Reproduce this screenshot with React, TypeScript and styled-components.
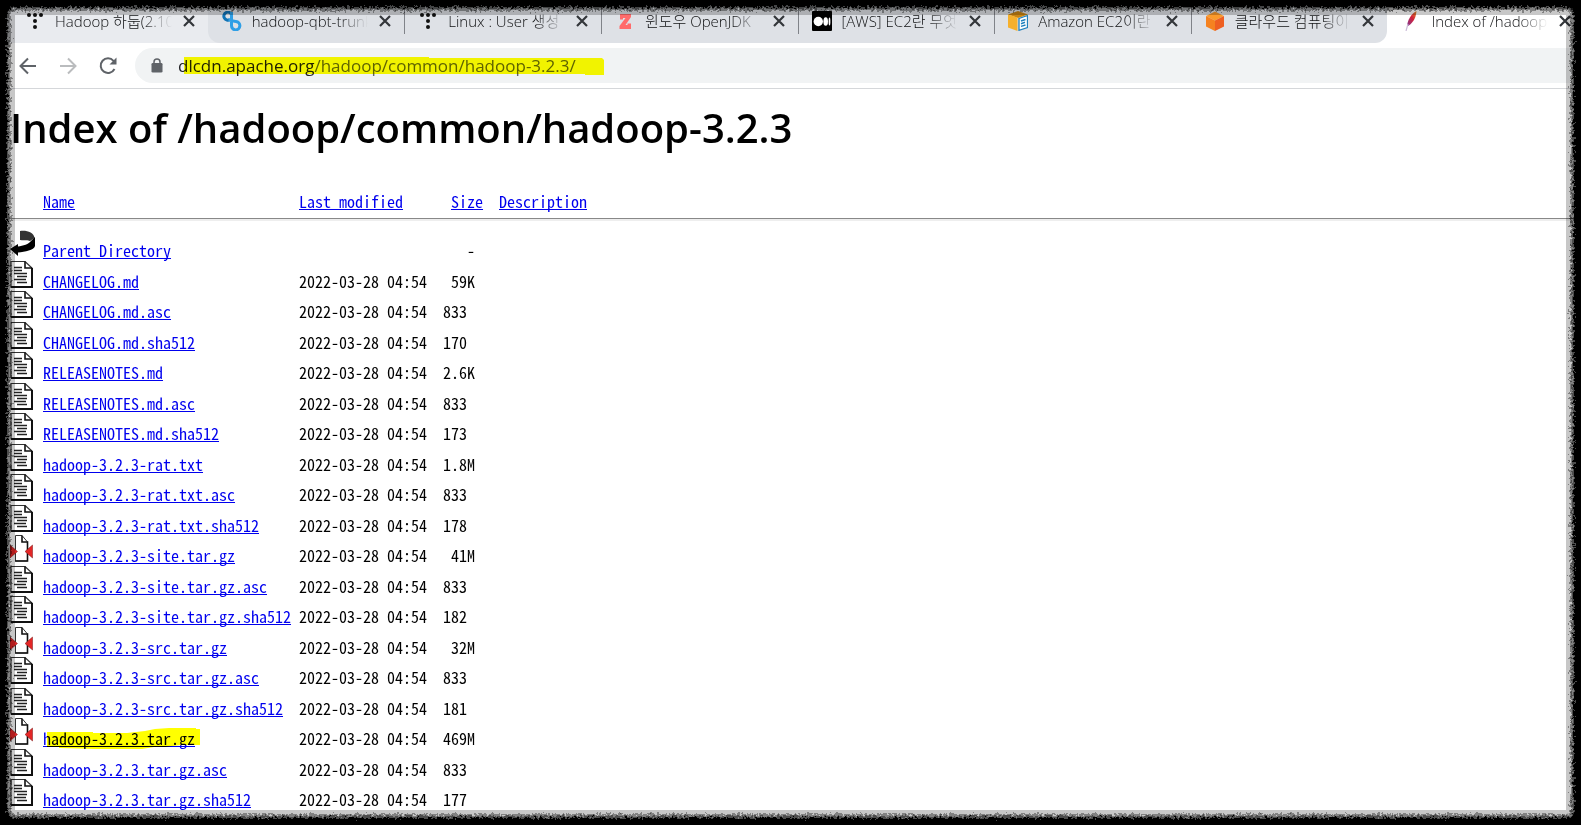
import React from 'react';
import styled, { createGlobalStyle } from 'styled-components';

const Global = createGlobalStyle`
  * { box-sizing: border-box; }
  html, body, #root { height: 100%; }
  body {
    margin: 0;
    overflow: hidden;
    background: #000;
    color: #000;
    font-family: "Open Sans", "Noto Sans CJK KR", sans-serif;
  }
`;

const Window = styled.div`
  position: relative;
  min-height: 100%;
  overflow: hidden;
  background: #fff;
  isolation: isolate;
`;

const TabStrip = styled.nav`
  display: flex;
  height: 43px;
  margin-right: -3px;
  padding-left: 11px;
  background: linear-gradient(90deg, #e9ebef 50%, #fff 50%);
`;

const Tab = styled.div`
  flex: 1 1 0;
  width: 0;
  min-width: 0;
  display: flex;
  align-items: center;
  padding: 0 9px 2px 14px;
`;

const EdgeTab = styled.div`
  flex: 1 1 0;
  min-width: 0;
  display: flex;
`;

const IdleTabs = styled.div`
  flex: 6 1 0;
  min-width: 0;
  display: flex;
  background: #dee1e6;
  border-radius: 0 0 12px 12px;
  overflow: hidden;

  ${Tab} + ${Tab} {
    background: linear-gradient(#808389, #808389) 0 0 / 1px 34px no-repeat;
  }
`;

const TabIcon = styled.svg`
  flex: none;
  width: 20px;
  height: 20px;
  margin-right: 10px;
`;

const TabTitle = styled.a`
  flex: 1;
  min-width: 0;
  overflow: hidden;
  white-space: nowrap;
  font-size: 15px;
  line-height: 22px;
  font-weight: 300;
  color: #101113;
  text-decoration: none;
  mask-image: linear-gradient(90deg, #000 calc(100% - 30px), transparent 100%);
`;

const TabClose = styled.button`
  flex: none;
  display: flex;
  align-items: center;
  justify-content: center;
  width: 20px;
  height: 20px;
  margin-left: 7px;
  padding: 0;
  border: 0;
  background: none;
`;

const Toolbar = styled.div`
  display: flex;
  align-items: center;
  height: 46px;
  padding-left: 18px;
  border-bottom: 1px solid #d5d7da;
`;

const NavButton = styled.button`
  flex: none;
  width: 20px;
  height: 20px;
  margin-right: 20px;
  padding: 0;
  border: 0;
  background: none;
  svg { display: block; }
  &:last-of-type { margin-right: 17px; }
`;

const Omnibox = styled.label`
  flex: 1;
  display: flex;
  align-items: center;
  gap: 15px;
  height: 35px;
  padding-left: 16px;
  margin-right: -20px;
  border-radius: 18px;
  background: #f1f3f4;
`;

const UrlField = styled.div`
  position: relative;
  flex: 1;
  font-size: 17px;
  line-height: 24px;
`;

const Url = styled.div`
  color: #5f6368;
  white-space: nowrap;
  b { font-weight: 400; color: #202124; }
`;

const Marker = styled.svg`
  position: absolute;
  overflow: visible;
  mix-blend-mode: multiply;
  pointer-events: none;
`;

const Page = styled.main`
  padding: 12px 0 0 10px;
`;

const Title = styled.h1`
  margin: 0;
  font-size: 40px;
  line-height: 54px;
  font-weight: 640;
  white-space: nowrap;
`;

const Listing = styled.table`
  width: 100%;
  margin-top: 26px;
  border-collapse: collapse;
  table-layout: fixed;
  font-family: "Noto Sans Mono CJK KR", "Liberation Mono", monospace;
  font-size: 16px;
  line-height: 24px;
  th, td {
    padding: 0;
    text-align: left;
    font-weight: 400;
    white-space: pre;
  }
`;

const HeadRow = styled.tr`
  height: 37px;
  th { vertical-align: top; padding-top: 8px; border-bottom: 1px solid #888; }
`;

const FileRow = styled.tr<{ $first?: boolean }>`
  height: ${p => (p.$first ? 44 : 30)}px;
  vertical-align: bottom;
  &:nth-child(even) { height: 31px; }
  ${p => p.$first && 'td { box-shadow: inset 0 2px #eee; }'}
`;

const FileIcon = styled.svg`
  display: block;
  width: 25px;
  height: 27px;
  margin: -2px 0 5px;
`;

const Link = styled.a`
  position: relative;
  color: #0000ee;
  text-decoration: underline;
  text-decoration-thickness: 1px;
  text-underline-offset: 1px;
  text-decoration-skip-ink: none;
`;

const Shade = styled.div`
  position: absolute;
  inset: 0;
  border: 15px solid rgba(0, 0, 0, 0.22);
  pointer-events: none;
`;

const Torn = styled.div<{ $size: number; $color: string }>`
  position: absolute;
  inset: -20px;
  border: ${p => p.$size + 20}px solid ${p => p.$color};
  border-radius: 34px;
  filter: url(#torn);
  pointer-events: none;
`;

const Dots = () => (
  <TabIcon viewBox="0 0 20 20" fill="#111">
    <circle cx="4" cy="4" r="2" /><circle cx="10" cy="4" r="2" /><circle cx="16" cy="4" r="2" />
    <circle cx="10" cy="10" r="2" /><circle cx="10" cy="16" r="2" />
  </TabIcon>
);
const Rings = () => (
  <TabIcon viewBox="0 0 20 20" fill="none" strokeWidth="3">
    <path d="M9.500 3.500A4 4 0 1 0 8 8.500" stroke="#1173b5" />
    <path d="M9.500 1V14.500A4.200 4.200 0 1 0 14 10.500C11 10.500 10 9 6.500 8.700" stroke="#2f9fe6" />
  </TabIcon>
);
const LetterZ = () => (
  <TabIcon viewBox="0 0 20 20" fill="#ff6b6b">
    <path d="M5 3H16V6L10.500 14H12.500V12.500H16V18H4.500V15L10.500 7H8V8.500H5Z" />
  </TabIcon>
);
const Medium = () => (
  <TabIcon viewBox="0 0 20 20">
    <rect width="20" height="20" rx="1" fill="#000" />
    <circle cx="6.300" cy="10.500" r="4.700" fill="#fff" />
    <ellipse cx="13.700" cy="10.500" rx="2.300" ry="4.300" fill="#fff" />
    <ellipse cx="17.500" cy="10.500" rx="0.900" ry="4" fill="#fff" />
  </TabIcon>
);
const DocBox = () => (
  <TabIcon viewBox="0 0 20 20">
    <path d="M0 3.500 10 0 20 3.500 10 7Z" fill="#c98512" />
    <path d="M0 3.500 9.500 6.500V20L0 16.500Z" fill="#f6b02c" />
    <path d="M11 7.500 19.500 4.500V16.500L11 19.300Z" fill="#fff" stroke="#1f80bd" strokeWidth="1.300" />
    <path d="M13 10 17.500 8.500M13 12.700 17 11.300M13 15.400 17.500 14" stroke="#1f80bd" strokeWidth="1.500" />
  </TabIcon>
);
const Cube = () => (
  <TabIcon viewBox="0 0 20 20">
    <path d="M1 5 10 0.500 19 5 10 9.500Z" fill="#fb9a2b" />
    <path d="M1 5 10 9.500V20L1 15.500Z" fill="#f58220" />
    <path d="M19 5 10 9.500V20L19 15.500Z" fill="#ee5f22" />
  </TabIcon>
);
const Feather = () => (
  <TabIcon viewBox="0 0 20 20">
    <defs>
      <linearGradient id="plume" x1="1" y1="0" x2="0" y2="1">
        <stop offset="0" stopColor="#e8912a" /><stop offset="0.450" stopColor="#d1203a" /><stop offset="1" stopColor="#7d3a97" />
      </linearGradient>
    </defs>
    <path d="M15.500 0C10 3 6.500 9 6 15.500C11 13 15 8 15.500 0Z" fill="url(#plume)" />
    <path d="M7 13 5 20" stroke="#cbbcd8" strokeWidth="1.200" />
  </TabIcon>
);

type TabSpec = { title: string; Icon: React.FC };

const firstTab: TabSpec = { title: 'Hadoop 하둡(2.10', Icon: Dots };
const idleTabs: TabSpec[] = [
  { title: 'hadoop-qbt-trunk', Icon: Rings },
  { title: 'Linux : User 생성', Icon: Dots },
  { title: '윈도우 OpenJDK', Icon: LetterZ },
  { title: '[AWS] EC2란 무엇', Icon: Medium },
  { title: 'Amazon EC2이란', Icon: DocBox },
  { title: '클라우드 컴퓨팅이', Icon: Cube },
];
const activeTab: TabSpec = { title: 'Index of /hadoop', Icon: Feather };

const BrowserTab = ({ title, Icon }: TabSpec) => (
  <Tab>
    <Icon />
    <TabTitle href="#">{title}</TabTitle>
    <TabClose aria-label="Close tab">
      <svg width="12" height="12" viewBox="0 0 12 12" stroke="#33363a" strokeWidth="2.200">
        <path d="M1 1 11 11M11 1 1 11" />
      </svg>
    </TabClose>
  </Tab>
);

type Kind = 'back' | 'text' | 'zip';
const KindIcon = ({ kind }: { kind: Kind }) => {
  if (kind === 'back') {
    return (
      <FileIcon viewBox="0 0 25 27">
        <path d="M10 1C16 0 24 2 24.500 8L20 11C18 9.500 15 10.500 10 10Z" fill="#333" />
        <path d="M25 7V16C24 20 15 22 8 22.500V26L0 19 8 14V16.500C13 16 19 14 21 11Z" fill="#000" />
      </FileIcon>
    );
  }
  if (kind === 'zip') {
    return (
      <FileIcon viewBox="0 0 25 27">
        <path d="M5.500 0.500H12L17.500 7V26H5.500Z" fill="#fff" stroke="#333" />
        <path d="M12 0.500V7H17.500V26H5" fill="none" stroke="#111" strokeWidth="1.600" />
        <path d="M0 10 7.500 16.500 0 23ZM22.500 10V23L15 16.500Z" fill="#e32626" stroke="#7a1515" strokeWidth="0.500" />
      </FileIcon>
    );
  }
  return (
    <FileIcon viewBox="0 0 25 27">
      <path d="M1 0.500H15L22 7V26H1Z" fill="#fff" stroke="#333" strokeWidth="1.200" />
      <path d="M22 7V26H1" fill="none" stroke="#111" strokeWidth="2" />
      <path d="M15 0.500V7H22" fill="none" stroke="#111" strokeWidth="1.600" />
      <path d="M4 6.500H12M4 9.500H12M4 12.500H17M7 15.500H17M4 18.500H16M7 21.500H17" stroke="#222" strokeWidth="1.600" />
    </FileIcon>
  );
};

const files: [string, string][] = [
  ['CHANGELOG.md', ' 59K'],
  ['CHANGELOG.md.asc', '833 '],
  ['CHANGELOG.md.sha512', '170 '],
  ['RELEASENOTES.md', '2.6K'],
  ['RELEASENOTES.md.asc', '833 '],
  ['RELEASENOTES.md.sha512', '173 '],
  ['hadoop-3.2.3-rat.txt', '1.8M'],
  ['hadoop-3.2.3-rat.txt.asc', '833 '],
  ['hadoop-3.2.3-rat.txt.sha512', '178 '],
  ['hadoop-3.2.3-site.tar.gz', ' 41M'],
  ['hadoop-3.2.3-site.tar.gz.asc', '833 '],
  ['hadoop-3.2.3-site.tar.gz.sha512', '182 '],
  ['hadoop-3.2.3-src.tar.gz', ' 32M'],
  ['hadoop-3.2.3-src.tar.gz.asc', '833 '],
  ['hadoop-3.2.3-src.tar.gz.sha512', '181 '],
  ['hadoop-3.2.3.tar.gz', '469M'],
  ['hadoop-3.2.3.tar.gz.asc', '833 '],
  ['hadoop-3.2.3.tar.gz.sha512', '177 '],
];

export default function App() {
  return (
    <Window>
      <Global />
      <TabStrip>
        <EdgeTab><BrowserTab {...firstTab} /></EdgeTab>
        <IdleTabs>
          {idleTabs.map(t => <BrowserTab key={t.title} {...t} />)}
        </IdleTabs>
        <EdgeTab><BrowserTab {...activeTab} /></EdgeTab>
      </TabStrip>
      <Toolbar>
        <NavButton aria-label="Back">
          <svg width="20" height="20" viewBox="0 0 20 20" fill="none" stroke="#5f6368" strokeWidth="2">
            <path d="M18 10H3M10 2.500 2.500 10 10 17.500" />
          </svg>
        </NavButton>
        <NavButton aria-label="Forward">
          <svg width="20" height="20" viewBox="0 0 20 20" fill="none" stroke="#babcbe" strokeWidth="2">
            <path d="M2 10H17M10 2.500 17.500 10 10 17.500" />
          </svg>
        </NavButton>
        <NavButton aria-label="Reload">
          <svg width="20" height="20" viewBox="0 0 20 20" fill="none" stroke="#5f6368" strokeWidth="2">
            <path d="M16.500 13A7.300 7.300 0 1 1 15.500 4.800L17 6.500" />
            <path d="M18.500 1.500V8.500H11.500Z" fill="#5f6368" stroke="none" />
          </svg>
        </NavButton>
        <Omnibox>
          <svg width="12" height="16" viewBox="0 0 12 16">
            <rect x="0.500" y="5" width="11" height="9.500" rx="1.300" fill="#5f6368" />
            <path d="M3 6V4A3 3 0 0 1 9 4V6" fill="none" stroke="#5f6368" strokeWidth="1.500" />
          </svg>
          <UrlField>
            <Url><b>dlcdn.apache.org</b>/hadoop/common/hadoop-3.2.3/</Url>
            <Marker width="420" height="18" viewBox="0 0 420 18" style={{ left: 6, top: 3 }}>
              <path d="M0 0H245V1H418L420 3V18H401V17H0Z" fill="#ff0" />
            </Marker>
          </UrlField>
        </Omnibox>
      </Toolbar>
      <Page>
        <Title>Index of /hadoop/common/hadoop-3.2.3</Title>
        <Listing>
          <colgroup>
            <col style={{ width: 33 }} /><col style={{ width: 256 }} /><col style={{ width: 144 }} />
            <col style={{ width: 56 }} /><col />
          </colgroup>
          <thead>
            <HeadRow>
              <th />
              <th><Link href="#">Name</Link></th>
              <th><Link href="#">Last modified</Link></th>
              <th>{' '}<Link href="#">Size</Link></th>
              <th><Link href="#">Description</Link></th>
            </HeadRow>
          </thead>
          <tbody>
            <FileRow $first>
              <td><KindIcon kind="back" /></td>
              <td><Link href="#">Parent Directory</Link></td>
              <td />
              <td>{'   -'}</td>
              <td />
            </FileRow>
            {files.map(([name, size]) => (
              <FileRow key={name}>
                <td><KindIcon kind={name.endsWith('.gz') ? 'zip' : 'text'} /></td>
                <td>
                  <Link href="#">
                    {name}
                    {name === 'hadoop-3.2.3.tar.gz' && (
                      <Marker width="154" height="22" viewBox="0 0 154 22" style={{ left: 4, top: 2 }}>
                        <path d="M0 4H46V5H80L98 3 108 1 122 0H149V1H153V17H134L118 19H107L95 21H48L12 20V19H0Z" fill="#ff0" />
                      </Marker>
                    )}
                  </Link>
                </td>
                <td>2022-03-28 04:54</td>
                <td>{size}</td>
                <td />
              </FileRow>
            ))}
          </tbody>
        </Listing>
      </Page>
      <svg width="0" height="0" aria-hidden="true" style={{ position: 'absolute' }}>
        <filter id="torn" x="0" y="0" width="100%" height="100%" colorInterpolationFilters="sRGB">
          <feTurbulence type="fractalNoise" baseFrequency="0.400" numOctaves="2" seed="4" />
          <feDisplacementMap in="SourceGraphic" scale="8" xChannelSelector="R" yChannelSelector="G" />
        </filter>
      </svg>
      <Shade />
      <Torn $size={11} $color="rgba(0, 0, 0, 0.35)" />
      <Torn $size={9} $color="rgba(0, 0, 0, 0.4)" />
      <Torn $size={7} $color="#000" />
    </Window>
  );
}
